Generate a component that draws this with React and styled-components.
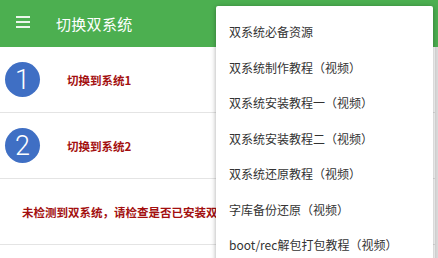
import React from "react";
import styled, { createGlobalStyle } from "styled-components";

const GlobalStyle = createGlobalStyle`
  html, body {
    margin: 0;
    padding: 0;
    width: 438px;
    height: 258px;
    overflow: hidden;
    background: #dcdcdc;
    font-family: "Noto Sans CJK SC", "Noto Sans", Roboto, sans-serif;
  }
`;

const Screen = styled.div`
  position: relative;
  width: 438px;
  height: 258px;
  overflow: hidden;
`;

const Toolbar = styled.header`
  height: 47px;
  background: #4caf50;
  display: flex;
  align-items: center;
  padding-left: 16px;
  gap: 26px;
  box-sizing: border-box;
`;

const Burger = styled.div`
  width: 14px;
  display: flex;
  flex-direction: column;
  gap: 2.7px;
  margin-top: -3px;

  span {
    display: block;
    height: 2px;
    background: #eaf6ea;
  }
`;

const Title = styled.h1`
  margin: 0;
  font-size: 15px;
  font-weight: 400;
  color: #ffffff;
  letter-spacing: 0.3px;
`;

const List = styled.div`
  margin-right: 3px;
  background: #ffffff;
  height: 211px;
`;

const Row = styled.div`
  height: 65px;
  display: flex;
  align-items: center;
  border-bottom: 1px solid #e4e4e4;
  padding-left: ${(p) => (p.$plain ? "22px" : "5px")};
`;

const Badge = styled.div`
  width: 35px;
  height: 35px;
  border-radius: 50%;
  background: #3f6fc4;
  color: #ffffff;
  display: flex;
  align-items: center;
  justify-content: center;
  font-family: Roboto, "Noto Sans", sans-serif;
  font-weight: 300;
  font-size: 27px;
  margin-right: 27px;
`;

const Label = styled.span`
  color: #a30f0f;
  font-weight: 700;
  font-size: 11.5px;
  white-space: nowrap;
`;

const Menu = styled.ul`
  position: absolute;
  top: 6px;
  left: 216px;
  width: 217px;
  margin: 0;
  padding: 8px 0 0;
  list-style: none;
  background: #ffffff;
  border-radius: 2px;
  box-shadow: 0 1px 5px rgba(0, 0, 0, 0.35);
  height: 270px;
  box-sizing: border-box;
`;

const MenuItem = styled.li`
  height: 35.5px;
  display: flex;
  align-items: center;
  padding-left: 13px;
  font-size: 12px;
  color: #333333;
  white-space: nowrap;
`;

const menuItems = [
  "双系统必备资源",
  "双系统制作教程（视频）",
  "双系统安装教程一（视频）",
  "双系统安装教程二（视频）",
  "双系统还原教程（视频）",
  "字库备份还原（视频）",
  "boot/rec解包打包教程（视频）",
];

export default function App() {
  return (
    <Screen>
      <GlobalStyle />
      <Toolbar>
        <Burger>
          <span />
          <span />
          <span />
        </Burger>
        <Title>切换双系统</Title>
      </Toolbar>
      <List>
        <Row>
          <Badge>1</Badge>
          <Label>切换到系统1</Label>
        </Row>
        <Row>
          <Badge>2</Badge>
          <Label>切换到系统2</Label>
        </Row>
        <Row $plain>
          <Label>未检测到双系统，请检查是否已安装双系统</Label>
        </Row>
      </List>
      <Menu>
        {menuItems.map((item) => (
          <MenuItem key={item}>{item}</MenuItem>
        ))}
      </Menu>
    </Screen>
  );
}
